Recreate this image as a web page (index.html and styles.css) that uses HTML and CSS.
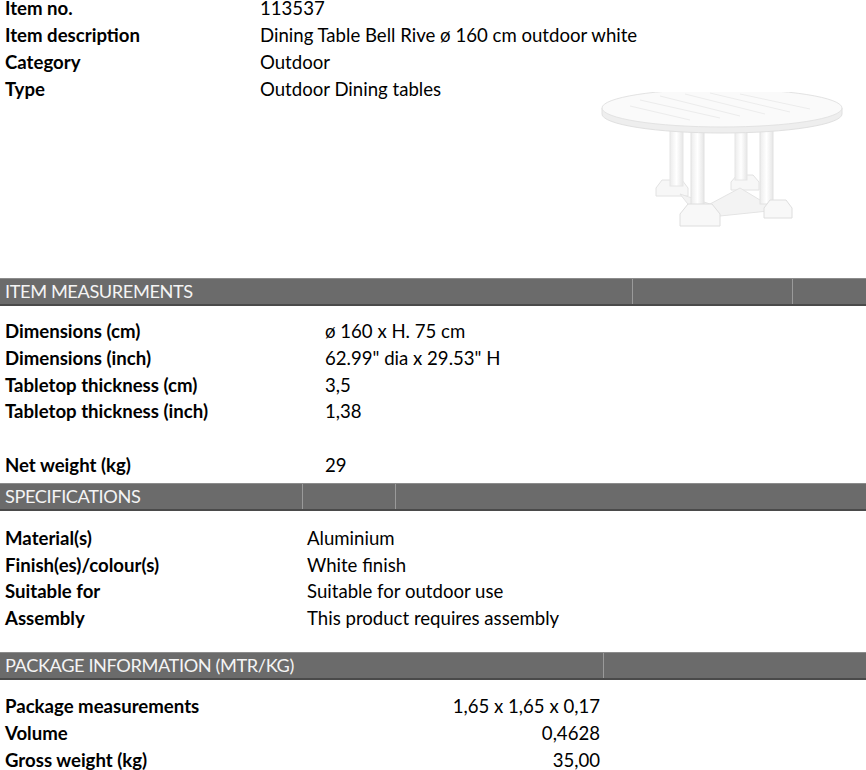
FILE: index.html
```html
<!DOCTYPE html>
<html>
<head>
<meta charset="utf-8">
<link rel="stylesheet" href="styles.css">
</head>
<body>
<div class="sheet">
  <section class="top">
    <div class="info">
      <div class="lbl">Item no.</div><div class="val">113537</div>
      <div class="lbl">Item description</div><div class="val">Dining Table Bell Rive ø 160 cm outdoor white</div>
      <div class="lbl">Category</div><div class="val">Outdoor</div>
      <div class="lbl">Type</div><div class="val">Outdoor Dining tables</div>
    </div>
    <div class="pic">
      <svg width="250" height="165" viewBox="0 0 250 165">
        <defs>
          <linearGradient id="leg" x1="0" x2="1">
            <stop offset="0" stop-color="#ececec"/>
            <stop offset="0.5" stop-color="#ffffff"/>
            <stop offset="1" stop-color="#e6e6e6"/>
          </linearGradient>
        </defs>
        <!-- back feet -->
        <path d="M56 96 L62 88 L82 88 L88 96 L88 104 L56 104 Z" fill="#f7f7f7" stroke="#e2e2e2"/>
        <path d="M131 90 L137 83 L153 83 L159 90 L159 98 L131 98 Z" fill="#f7f7f7" stroke="#e2e2e2"/>
        <!-- cross base -->
        <path d="M80 102 L110 112 L140 96 L160 108 L178 118 L120 124 L102 130 Z" fill="#f3f3f3" stroke="#e4e4e4"/>
        <!-- back legs -->
        <rect x="70" y="36" width="13" height="58" fill="url(#leg)" stroke="#e6e6e6"/>
        <rect x="135" y="36" width="12" height="52" fill="url(#leg)" stroke="#e6e6e6"/>
        <!-- front legs -->
        <rect x="91" y="38" width="13" height="78" fill="url(#leg)" stroke="#e2e2e2"/>
        <rect x="160" y="38" width="13" height="74" fill="url(#leg)" stroke="#e2e2e2"/>
        <!-- front feet -->
        <path d="M80 122 L88 112 L112 112 L120 122 L120 134 L80 134 Z" fill="#f8f8f8" stroke="#dedede"/>
        <path d="M164 116 L170 108 L186 108 L192 116 L192 126 L164 126 Z" fill="#f8f8f8" stroke="#dedede"/>
        <!-- table top edge -->
        <path d="M2 16 L2 22 A120 19 0 0 0 242 22 L242 16 Z" fill="#eeeeee" stroke="#e0e0e0"/>
        <!-- table top surface -->
        <ellipse cx="122" cy="16" rx="120" ry="19" fill="#fafafa" stroke="#e3e3e3"/>
        <g stroke="#ececec" stroke-width="1">
          <line x1="40" y1="8" x2="120" y2="26"/>
          <line x1="60" y1="4" x2="140" y2="24"/>
          <line x1="85" y1="2" x2="165" y2="22"/>
          <line x1="110" y1="1" x2="190" y2="20"/>
          <line x1="140" y1="2" x2="210" y2="17"/>
          <line x1="30" y1="14" x2="90" y2="28"/>
        </g>
      </svg>
    </div>
  </section>

  <div class="bar bar-meas">
    <span class="bar-title">ITEM MEASUREMENTS</span>
    <span class="div d1"></span><span class="div d2"></span>
  </div>
  <section class="rows rows-meas">
    <div class="lbl">Dimensions (cm)</div><div class="val">ø 160 x H. 75 cm</div>
    <div class="lbl">Dimensions (inch)</div><div class="val">62.99" dia x 29.53" H</div>
    <div class="lbl">Tabletop thickness (cm)</div><div class="val">3,5</div>
    <div class="lbl">Tabletop thickness (inch)</div><div class="val">1,38</div>
    <div class="lbl"></div><div class="val"></div>
    <div class="lbl">Net weight (kg)</div><div class="val">29</div>
  </section>

  <div class="bar bar-spec">
    <span class="bar-title">SPECIFICATIONS</span>
    <span class="div d3"></span><span class="div d4"></span>
  </div>
  <section class="rows rows-spec">
    <div class="lbl">Material(s)</div><div class="val">Aluminium</div>
    <div class="lbl">Finish(es)/colour(s)</div><div class="val">White finish</div>
    <div class="lbl">Suitable for</div><div class="val">Suitable for outdoor use</div>
    <div class="lbl">Assembly</div><div class="val">This product requires assembly</div>
  </section>

  <div class="bar bar-pack">
    <span class="bar-title">PACKAGE INFORMATION (MTR/KG)</span>
    <span class="div d5"></span>
  </div>
  <section class="rows rows-pack">
    <div class="lbl">Package measurements</div><div class="val num">1,65 x 1,65 x 0,17</div>
    <div class="lbl">Volume</div><div class="val num">0,4628</div>
    <div class="lbl">Gross weight (kg)</div><div class="val num">35,00</div>
  </section>
</div>
</body>
</html>
```

FILE: styles.css
```css
html, body {
  margin: 0;
  padding: 0;
  background: #ffffff;
}
.sheet {
  width: 866px;
  height: 770px;
  overflow: hidden;
  font-family: Lato, "Open Sans", "Liberation Sans", sans-serif;
  font-size: 18.6px;
  color: #000;
}
.lbl {
  font-weight: 700;
  padding-left: 5px;
  white-space: nowrap;
}
.val {
  white-space: nowrap;
}
.top {
  height: 283px;
  margin-top: -5px;
  display: flex;
  position: relative;
}
.info {
  display: grid;
  grid-template-columns: 260px auto;
  grid-auto-rows: 27px;
  line-height: 27px;
  align-content: start;
}
.pic {
  position: absolute;
  left: 600px;
  top: 97px;
}
.bar {
  position: relative;
  height: 25px;
  background: #6b6b6b;
  border-top: 1px solid #8c8c8c;
  border-bottom: 2px solid #4a4a4a;
  box-sizing: content-box;
}
.bar-title {
  display: block;
  padding-left: 5px;
  line-height: 25px;
  color: #f4f4f4;
  font-weight: 400;
  font-size: 18.2px;
  letter-spacing: -0.4px;
}
.div {
  position: absolute;
  top: 0;
  bottom: 0;
  width: 1px;
  background: #9a9a9a;
}
.d1 { left: 632px; }
.d2 { left: 792px; }
.d3 { left: 302px; }
.d4 { left: 395px; }
.d5 { left: 603px; }
.rows {
  display: grid;
  grid-auto-rows: 26.8px;
  line-height: 26.8px;
}
.rows-meas {
  grid-template-columns: 325px auto;
  padding-top: 12px;
  padding-bottom: 4px;
}
.rows-spec {
  grid-template-columns: 307px auto;
  padding-top: 14px;
  padding-bottom: 20px;
}
.rows-pack {
  grid-template-columns: 300px 300px;
  padding-top: 13px;
}
.num {
  text-align: right;
}
```
